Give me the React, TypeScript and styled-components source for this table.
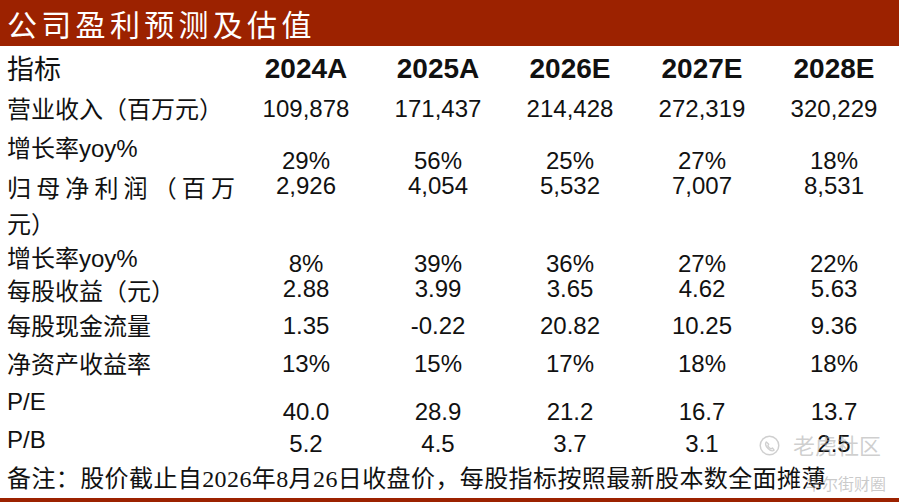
import React from "react";
import styled, { createGlobalStyle } from "styled-components";

const Global = createGlobalStyle`
  html, body { margin: 0; padding: 0; background: #fff; }
  #root { width: 903px; height: 503px; }
`;

const RED = "#9c2200";

const Page = styled.div`
  position: relative;
  width: 903px;
  height: 503px;
  overflow: hidden;
  background: #fff;
  display: flex;
  flex-direction: column;
  text-spacing-trim: space-all;
`;

const TitleBar = styled.div`
  width: 899px;
  height: 46px;
  flex: none;
  box-sizing: border-box;
  background: ${RED};
  color: #fff;
  font-family: "Noto Sans CJK SC", sans-serif;
  font-size: 30px;
  letter-spacing: 4.3px;
  line-height: 46px;
  padding-left: 7px;
  white-space: nowrap;
`;

const Table = styled.div`
  display: flex;
  flex-direction: column;
  flex: none;
`;

const Row = styled.div<{ $h: number }>`
  display: grid;
  grid-template-columns: 240px repeat(5, 132px);
  height: ${(p) => p.$h}px;
  flex: none;
`;

const LabelCell = styled.div<{ $top: number; $header?: boolean }>`
  box-sizing: border-box;
  padding: ${(p) => p.$top}px 5px 0 7px;
  font-family: "Liberation Sans", "Noto Sans CJK SC", sans-serif;
  font-size: ${(p) => (p.$header ? 27 : 24)}px;
  line-height: 36px;
  text-align: justify;
  text-spacing-trim: space-all;
  color: #111;
`;

const ValueCell = styled.div<{ $top: number; $header?: boolean }>`
  box-sizing: border-box;
  padding-top: ${(p) => p.$top}px;
  text-align: center;
  font-family: "Liberation Sans", Arial, sans-serif;
  font-size: ${(p) => (p.$header ? 28 : 24)}px;
  font-weight: ${(p) => (p.$header ? 700 : 400)};
  line-height: 36px;
  white-space: nowrap;
  color: #111;
`;

const Note = styled.div`
  flex: none;
  height: 40px;
  box-sizing: border-box;
  padding: 3px 0 0 7px;
  font-family: "Liberation Serif", "Noto Sans CJK SC", serif;
  font-size: 24px;
  line-height: 36px;
  letter-spacing: 0.4px;
  white-space: nowrap;
  color: #111;
`;

const BottomBar = styled.div`
  flex: none;
  width: 899px;
  height: 4px;
  background: ${RED};
`;

const Watermark = styled.div`
  position: absolute;
  left: 759px;
  top: 429px;
  display: grid;
  grid-template-columns: 34px auto;
  row-gap: 14px;
  pointer-events: none;
  color: rgba(160, 160, 160, 0.5);
  font-family: "Noto Sans CJK SC", sans-serif;
`;

const MarkIcon = styled.svg`
  width: 21px;
  height: 21px;
  margin-top: 6px;
`;

const MarkName = styled.div`
  font-size: 22px;
  line-height: 30px;
`;

const MarkSub = styled.div`
  grid-column: 2;
  font-size: 16px;
  line-height: 20px;
  margin-left: 13px;
  color: rgba(150, 150, 150, 0.5);
`;

type RowSpec = {
  label: string;
  values: string[];
  h: number;
  lt: number;
  vt: number;
  header?: boolean;
};

const rows: RowSpec[] = [
  { label: "指标", values: ["2024A", "2025A", "2026E", "2027E", "2028E"], h: 42, lt: 6, vt: 5, header: true },
  { label: "营业收入（百万元）", values: ["109,878", "171,437", "214,428", "272,319", "320,229"], h: 40, lt: 4, vt: 3 },
  { label: "增长率yoy%", values: ["29%", "56%", "25%", "27%", "18%"], h: 38, lt: 3, vt: 15 },
  { label: "归母净利润（百万元）", values: ["2,926", "4,054", "5,532", "7,007", "8,531"], h: 73, lt: 5, vt: 2 },
  { label: "增长率yoy%", values: ["8%", "39%", "36%", "27%", "22%"], h: 31, lt: 2, vt: 7 },
  { label: "每股收益（元）", values: ["2.88", "3.99", "3.65", "4.62", "5.63"], h: 36, lt: 4, vt: 1 },
  { label: "每股现金流量", values: ["1.35", "-0.22", "20.82", "10.25", "9.36"], h: 38, lt: 3, vt: 2 },
  { label: "净资产收益率", values: ["13%", "15%", "17%", "18%", "18%"], h: 40, lt: 3, vt: 2 },
  { label: "P/E", values: ["40.0", "28.9", "21.2", "16.7", "13.7"], h: 38, lt: 0, vt: 10 },
  { label: "P/B", values: ["5.2", "4.5", "3.7", "3.1", "2.5"], h: 36, lt: 0, vt: 4 },
];

export default function App() {
  return (
    <Page>
      <Global />
      <TitleBar>公司盈利预测及估值</TitleBar>
      <Table>
        {rows.map((r, i) => (
          <Row key={i} $h={r.h}>
            <LabelCell $top={r.lt} $header={r.header}>
              {r.label}
            </LabelCell>
            {r.values.map((v, j) => (
              <ValueCell key={j} $top={r.vt} $header={r.header}>
                {v}
              </ValueCell>
            ))}
          </Row>
        ))}
      </Table>
      <Note>备注：股价截止自2026年8月26日收盘价，每股指标按照最新股本数全面摊薄</Note>
      <BottomBar />
      <Watermark>
        <MarkIcon viewBox="0 0 26 26">
          <circle cx="13" cy="13" r="11.5" fill="none" stroke="rgba(160,160,160,0.5)" strokeWidth="1.8" />
          <path
            d="M9 8.5 c-1.6 2.2 -0.6 5.4 2.2 8.2 c2.6 2.6 5.8 3.6 7.6 2 l-2.2 -2.6 l-1.8 1 c-1.4 -0.6 -3 -2.2 -3.8 -3.8 l1 -1.8 z"
            fill="none"
            stroke="rgba(160,160,160,0.5)"
            strokeWidth="1.7"
            strokeLinejoin="round"
          />
        </MarkIcon>
        <MarkName>老虎社区</MarkName>
        <MarkSub>华尔街财圈</MarkSub>
      </Watermark>
    </Page>
  );
}
